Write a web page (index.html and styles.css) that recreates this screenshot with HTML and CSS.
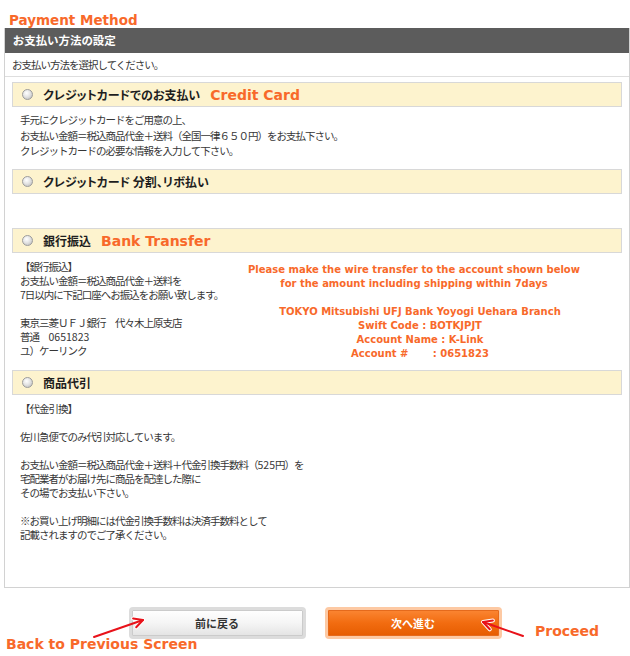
FILE: index.html
```html
<!DOCTYPE html>
<html lang="ja">

<head>
    <meta charset="UTF-8">
    <meta name="viewport" content="width=device-width, initial-scale=1.0">
    <title>お支払い方法の設定</title>
    <link rel="stylesheet" href="styles.css">
</head>

<body>
    <div class="page">
        <div class="page-title note">Payment Method</div>

        <div class="panel">
            <div class="panel-head">お支払い方法の設定</div>
            <div class="panel-lead">お支払い方法を選択してください。</div>

            <div class="options">
                <!-- クレジットカード -->
                <div class="option option-credit">
                    <label class="option-bar">
                        <span class="radio"></span>
                        <span class="option-name">クレジットカードでのお支払い</span>
                        <span class="note">Credit Card</span>
                    </label>
                    <div class="option-body">
                        手元にクレジットカードをご用意の上、<br>
                        お支払い金額＝税込商品代金＋送料（全国一律６５０円）をお支払下さい。<br>
                        クレジットカードの必要な情報を入力して下さい。
                    </div>
                </div>

                <!-- 分割・リボ -->
                <div class="option option-split">
                    <label class="option-bar">
                        <span class="radio"></span>
                        <span class="option-name">クレジットカード 分割、リボ払い</span>
                    </label>
                    <div class="option-body"></div>
                </div>

                <!-- 銀行振込 -->
                <div class="option option-bank">
                    <label class="option-bar">
                        <span class="radio"></span>
                        <span class="option-name">銀行振込</span>
                        <span class="note">Bank Transfer</span>
                    </label>
                    <div class="option-body bank-body">
                        <div class="bank-left">
                            <p>【銀行振込】<br>
                                お支払い金額＝税込商品代金＋送料を<br>
                                7日以内に下記口座へお振込をお願い致します。</p>
                            <p>東京三菱ＵＦＪ銀行　代々木上原支店<br>
                                普通　<span class="num">0651823</span><br>
                                ユ）ケーリンク</p>
                        </div>
                        <div class="bank-right">
                            <p>Please make the wire transfer to the account shown below<br>
                                for the amount including shipping within 7days</p>
                            <p class="bank-account">TOKYO Mitsubishi UFJ Bank Yoyogi Uehara Branch<br>
                                Swift Code : BOTKJPJT<br>
                                Account Name : K-Link<br>
                                <span class="keep">Account #       : 0651823</span></p>
                        </div>
                    </div>
                </div>

                <!-- 代金引換 -->
                <div class="option option-cod">
                    <label class="option-bar">
                        <span class="radio"></span>
                        <span class="option-name">商品代引</span>
                    </label>
                    <div class="option-body">
                        <p>【代金引換】</p>
                        <p>佐川急便でのみ代引対応しています。</p>
                        <p>お支払い金額＝税込商品代金＋送料＋代金引換手数料（<span class="num">525</span>円）を<br>
                            宅配業者がお届け先に商品を配達した際に<br>
                            その場でお支払い下さい。</p>
                        <p>※お買い上げ明細には代金引換手数料は決済手数料として<br>
                            記載されますのでご了承ください。</p>
                    </div>
                </div>
            </div>
        </div>

        <div class="actions">
            <button class="btn btn-back">前に戻る</button>
            <button class="btn btn-next">次へ進む</button>

            <!-- 注釈（矢印とラベル） -->
            <svg class="arrows" width="630" height="67" viewBox="0 0 630 67">
                <g fill="none" stroke="#fff" stroke-width="4" stroke-linecap="round" stroke-linejoin="round">
                    <polyline points="133.1,30.5 143,32 136.2,39.3" />
                    <polyline points="489.8,41.3 483,34 492.9,32.5" />
                </g>
                <g fill="none" stroke="#e8121a" stroke-width="2" stroke-linecap="round" stroke-linejoin="round">
                    <line x1="94" y1="49" x2="143" y2="32" />
                    <polyline points="133.1,30.5 143,32 136.2,39.3" />
                    <line x1="523" y1="48" x2="483" y2="34" />
                    <polyline points="489.8,41.3 483,34 492.9,32.5" />
                </g>
            </svg>
            <span class="note label-back">Back to Previous Screen</span>
            <span class="note label-next">Proceed</span>
        </div>
    </div>
</body>

</html>
```

FILE: styles.css
```css
html,
body {
    margin: 0;
    background: #fff;
    overflow: hidden;
}

body {
    font-family: "Noto Sans CJK JP", "Liberation Sans", sans-serif;
    font-size: 10.5px;
    letter-spacing: -1px;
    color: #363636;
}

.page {
    width: 630px;
}

/* 注釈用のオレンジ文字 */
.note {
    font-family: "DejaVu Sans", "Liberation Sans", sans-serif;
    font-weight: bold;
    font-size: 14px;
    letter-spacing: 0;
    color: #f8692a;
}

.page-title {
    padding: 12px 0 0 9px;
    font-size: 13.5px;
    line-height: 16px;
}

/* パネル */
.panel {
    margin-left: 4px;
    border: 1px solid #d2d2d2;
    border-top: none;
}

.panel-head {
    height: 25px;
    line-height: 25px;
    padding-left: 8px;
    background: #5c5c5c;
    color: #fff;
    font-weight: bold;
    font-size: 11.5px;
    letter-spacing: 0;
    font-feature-settings: "palt";
}

.panel-lead {
    height: 23px;
    line-height: 23px;
    padding-left: 7px;
    border-bottom: 1px solid #dedede;
}

.options {
    padding: 5px 7px 0;
}

.option-bar {
    display: flex;
    align-items: center;
    height: 23px;
    padding-left: 9px;
    background: #fdf3ce;
    border: 1px solid #d8d8d8;
    cursor: pointer;
}

.radio {
    width: 9px;
    height: 9px;
    border-radius: 50%;
    border: 1px solid #9c9c9c;
    background: radial-gradient(circle at 40% 35%, #fff 0, #e4e4e4 45%, #b5b5b5 100%);
    margin-right: 10px;
    flex: none;
}

.option-name {
    font-weight: bold;
    font-size: 12px;
    letter-spacing: 0;
    font-feature-settings: "palt";
    color: #1e1e1e;
    margin-right: 10px;
}

.option-body {
    padding: 7px 8px 0;
    line-height: 14px;
}

.option-body p {
    margin: 0 0 14px;
}

.option-body p:last-child {
    margin-bottom: 0;
}

.num {
    letter-spacing: 0;
}

.option-credit .option-body {
    padding: 5px 8px 10.5px;
    line-height: 15.5px;
}

.option-split .option-body {
    height: 34px;
    padding: 0;
}

.option-bank .option-body {
    padding-bottom: 9px;
}

.option-cod .option-body {
    padding-bottom: 45px;
}

/* 銀行振込の2列 */
.bank-body {
    display: grid;
    grid-template-columns: minmax(0, 1fr) 400px;
}

.bank-left {
    white-space: nowrap;
}

.bank-right {
    padding-top: 3px;
    text-align: center;
    font-family: "DejaVu Sans", "Liberation Sans", sans-serif;
    font-weight: bold;
    font-size: 10px;
    letter-spacing: 0;
    color: #f8692a;
}

.bank-account {
    padding-left: 12px;
}

.keep {
    white-space: pre;
}

/* ボタン */
.actions {
    position: relative;
    height: 67px;
    display: flex;
    justify-content: center;
    align-items: flex-start;
    gap: 19px;
    padding-top: 19px;
    box-sizing: border-box;
}

.btn {
    width: 177px;
    height: 32px;
    border-radius: 4px;
    font-family: "Noto Sans CJK JP", sans-serif;
    font-weight: bold;
    font-size: 11px;
    letter-spacing: 0;
    cursor: pointer;
}

.btn-back {
    border: 3px solid #dcdcdc;
    background: linear-gradient(#fff, #f5f5f5 50%, #e3e3e3);
    box-shadow: inset 0 0 0 1px #cbcbcb;
    color: #333;
}

.btn-next {
    border: 3px solid #fdc9a3;
    background: linear-gradient(#fb8633, #f26c10 50%, #e65c00);
    box-shadow: inset 0 0 0 1px #e56a1c;
    color: #fff;
}

.arrows {
    position: absolute;
    top: 0;
    left: 0;
    pointer-events: none;
}

.label-back {
    position: absolute;
    left: 6px;
    top: 48px;
    line-height: 16px;
}

.label-next {
    position: absolute;
    left: 535px;
    top: 35px;
    line-height: 16px;
}
```
